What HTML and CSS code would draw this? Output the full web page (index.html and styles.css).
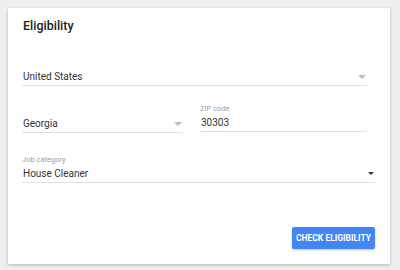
FILE: index.html
```html
<!DOCTYPE html>
<html>
<head>
<meta charset="utf-8">
<link rel="stylesheet" href="styles.css">
</head>
<body>
<div class="card">
  <h1 class="title">Eligibility</h1>
  <div class="field country">
    <div class="select"><span class="value">United States</span><span class="arrow light"></span></div>
  </div>
  <div class="row">
    <div class="field state">
      <div class="select"><span class="value">Georgia</span><span class="arrow light"></span></div>
    </div>
    <div class="field zip">
      <label class="label">ZIP code</label>
      <div class="input"><span class="value">30303</span></div>
    </div>
  </div>
  <div class="field job">
    <label class="label">Job category</label>
    <div class="select"><span class="value">House Cleaner</span><span class="arrow dark"></span></div>
  </div>
  <div class="actions">
    <button class="btn">CHECK ELIGIBILITY</button>
  </div>
</div>
</body>
</html>
```
FILE: styles.css
```css
html, body { margin: 0; padding: 0; }
body {
  background: #efefef;
  font-family: Roboto, "Noto Sans", sans-serif;
  width: 400px;
  height: 270px;
  padding: 8px 0 0 8px;
  box-sizing: border-box;
}
.card {
  width: 382px;
  height: 256px;
  background: #fff;
  box-shadow: 0 1px 3px rgba(0,0,0,0.25);
  box-sizing: border-box;
  padding: 10px 14px 0 14px;
}
.title {
  margin: 0 0 0 1px;
  font-size: 12.5px;
  font-weight: 500;
  color: #212121;
  line-height: 16px;
}
.field { display: flex; flex-direction: column; }
.country { margin-top: 34px; width: 345px; }
.select, .input {
  display: flex;
  align-items: center;
  justify-content: space-between;
  border-bottom: 1px solid #e0e0e0;
  height: 18px;
  box-sizing: border-box;
}
.value {
  font-size: 10px;
  color: #333;
  padding-left: 1px;
}
.arrow {
  width: 0; height: 0;
  border-left: 4px solid transparent;
  border-right: 4px solid transparent;
  border-top: 4px solid #bdbdbd;
  margin-right: 1px;
}
.arrow.dark {
  border-top-color: #333;
  border-left-width: 3.5px;
  border-right-width: 3.5px;
  border-top-width: 3.5px;
}
.row { display: flex; gap: 17px; margin-top: 17px; }
.state { width: 161px; margin-top: 12px; }
.zip { width: 167px; }
.label {
  font-size: 7.5px;
  color: #9e9e9e;
  line-height: 11px;
  height: 11px;
}
.job { margin-top: 21px; width: 353px; }
.actions {
  display: flex;
  justify-content: flex-end;
  margin-top: 44px;
  width: 353px;
}
.btn {
  background: #4285f4;
  color: #fff;
  border: none;
  border-radius: 2px;
  font-family: Roboto, sans-serif;
  font-weight: 700;
  font-size: 8.5px;
  height: 22px;
  width: 83px;
  padding: 0;
  box-shadow: 0 1px 2px rgba(0,0,0,0.25);
}
```
